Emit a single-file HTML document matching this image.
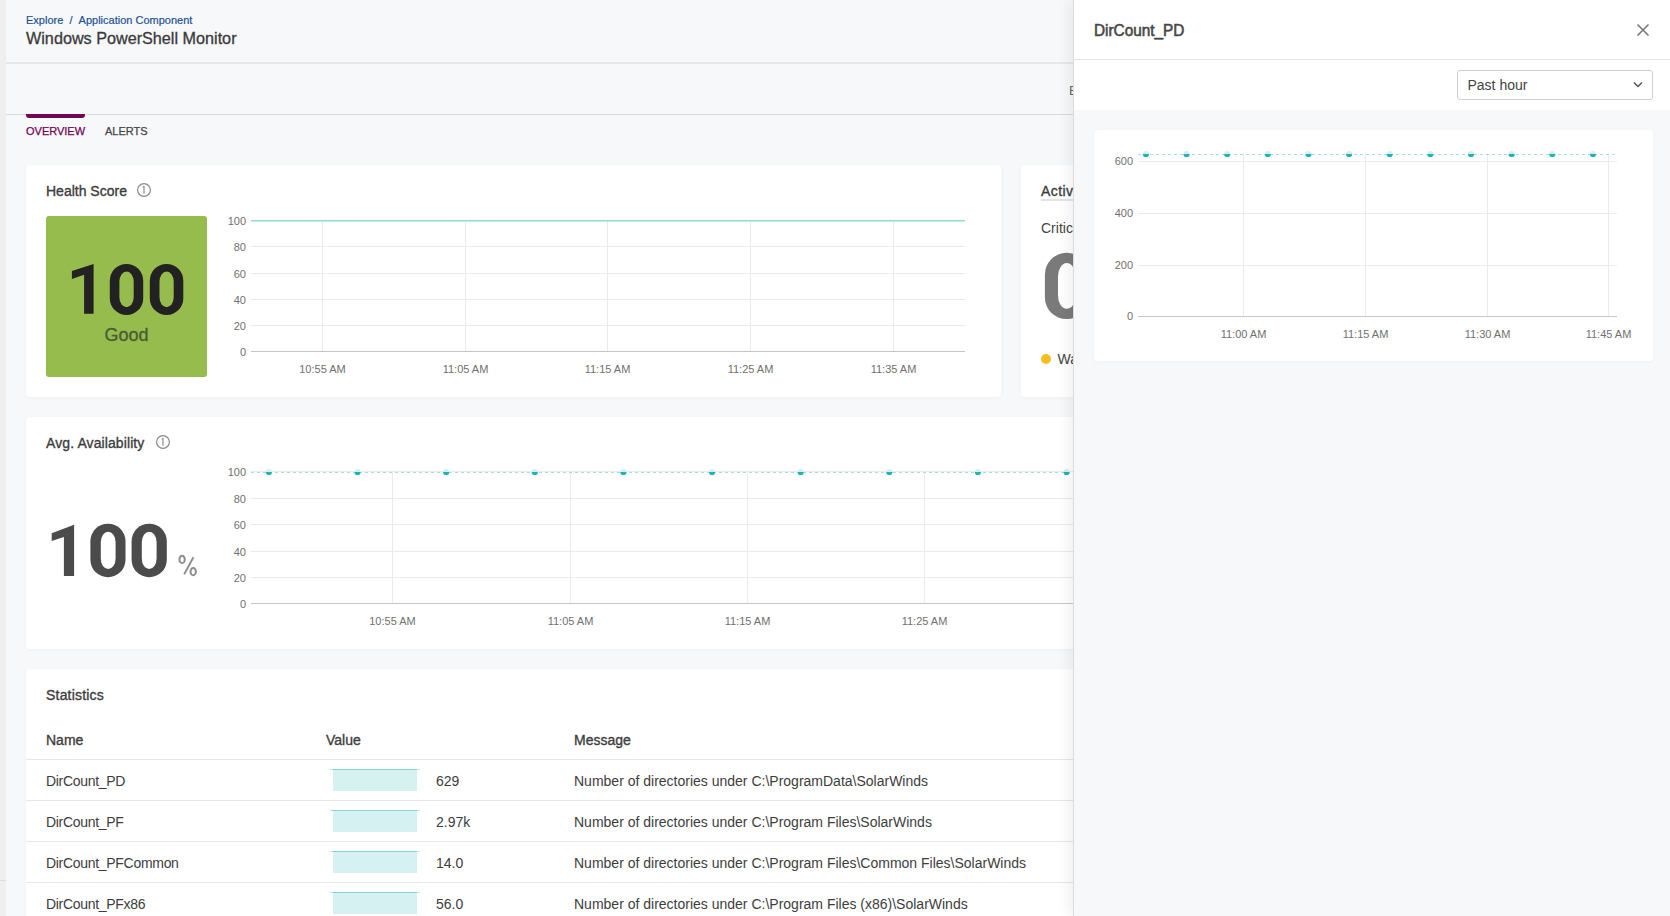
<!DOCTYPE html>
<html><head><meta charset="utf-8">
<style>
*{box-sizing:border-box;margin:0;padding:0}
html,body{width:1670px;height:916px;overflow:hidden}
body{background:#f7f8fa;font-family:"Liberation Sans",sans-serif;color:#333;position:relative}
.a{position:absolute;white-space:nowrap;line-height:1}
.card{position:absolute;background:#fff;border-radius:4px;box-shadow:0 1px 4px rgba(0,0,0,0.035)}
.drawer{position:absolute;left:1073px;top:0;width:597px;height:916px;background:#f7f8fa;border-left:1px solid #dcdcdc;box-shadow:-5px 0 12px rgba(0,0,0,0.06)}
</style></head><body>
<div class="a" style="left:0;top:0;width:6px;height:916px;background:#efefef"></div>
<div class="a" style="left:0;top:880px;width:6px;height:1px;background:#dedede"></div>
<div class="a" style="left:26px;top:14.69px;font-size:11px;font-weight:400;color:#1d5296;-webkit-text-stroke:0.2px #1d5296">Explore&nbsp;&nbsp;/&nbsp;&nbsp;Application Component</div>
<div class="a" style="left:26px;top:30.29px;font-size:16.2px;font-weight:400;color:#3b3b3b;-webkit-text-stroke:0.3px #3b3b3b">Windows PowerShell Monitor</div>
<div class="a" style="left:6px;top:62px;width:1067px;height:2px;background:#e6e7e9"></div>
<div class="a" style="left:1069px;top:84.00px;font-size:13px;font-weight:400;color:#666;">Edit</div>
<div class="a" style="left:6px;top:114px;width:1067px;height:1px;background:#dadbdd"></div>
<div class="a" style="left:26px;top:114px;width:59px;height:4px;background:#710654;border-radius:0 0 3px 3px"></div>
<div class="a" style="left:26px;top:125.69px;font-size:11px;font-weight:400;color:#710654;-webkit-text-stroke:0.25px #710654">OVERVIEW</div>
<div class="a" style="left:105px;top:125.69px;font-size:11px;font-weight:400;color:#444;-webkit-text-stroke:0.25px #444">ALERTS</div>
<div class="card" style="left:26px;top:165px;width:975px;height:232px"></div>
<div class="a" style="left:46px;top:183.85px;font-size:14px;font-weight:400;color:#3d3d3d;-webkit-text-stroke:0.35px #3d3d3d">Health Score</div>
<svg class="a" style="left:136px;top:182px" width="16" height="16" viewBox="0 0 16 16"><circle cx="8" cy="8" r="6.4" fill="none" stroke="#8a8a8a" stroke-width="1.2"/><path d="M8 4.2 V11.8" stroke="#8a8a8a" stroke-width="1.15" fill="none"/><path d="M6.5 4.9 H8.4" stroke="#8a8a8a" stroke-width="1" fill="none"/></svg>
<div class="a" style="left:46px;top:216px;width:161px;height:161px;background:#97bc4e;border-radius:3px"></div>
<svg class="a" style="left:0;top:0" width="1670" height="916" viewBox="0 0 1670 916"><path d="M71.9 271.1 L93.6 264 L93.6 313.8 L84.1 313.8 L84.1 274.8 L71.9 279 Z" fill="#222"/><rect x="109.8" y="264" width="33.4" height="50.9" rx="16.7" ry="16.5" fill="#222"/><rect x="119.4" y="271.6" width="14.3" height="35.6" rx="7.15" ry="10" fill="#97bc4e"/><rect x="149.8" y="264" width="33.5" height="50.9" rx="16.7" ry="16.5" fill="#222"/><rect x="159.5" y="271.6" width="14.2" height="35.6" rx="7.1" ry="10" fill="#97bc4e"/></svg>
<div class="a" style="left:46.00px;top:325.76px;width:161px;text-align:center;font-size:18px;font-weight:400;color:#4a5c33;-webkit-text-stroke:0.35px #4a5c33">Good</div>
<svg class="a" style="left:0;top:0" width="1670" height="916" viewBox="0 0 1670 916"><rect x="251" y="220" width="714" height="1" fill="#ebebeb"/><rect x="251" y="246" width="714" height="1" fill="#ebebeb"/><rect x="251" y="273" width="714" height="1" fill="#ebebeb"/><rect x="251" y="299" width="714" height="1" fill="#ebebeb"/><rect x="251" y="325" width="714" height="1" fill="#ebebeb"/><rect x="251" y="351" width="714" height="1" fill="#c6c6c6"/><rect x="322" y="220" width="1" height="131" fill="#ebebeb"/><rect x="465" y="220" width="1" height="131" fill="#ebebeb"/><rect x="607" y="220" width="1" height="131" fill="#ebebeb"/><rect x="750" y="220" width="1" height="131" fill="#ebebeb"/><rect x="893" y="220" width="1" height="131" fill="#ebebeb"/><rect x="251" y="220" width="714" height="1.5" fill="#8fd9d6"/></svg>
<div class="a" style="left:206.00px;top:215.99px;width:40px;text-align:right;font-size:11px;font-weight:400;color:#707070;">100</div>
<div class="a" style="left:206.00px;top:241.99px;width:40px;text-align:right;font-size:11px;font-weight:400;color:#707070;">80</div>
<div class="a" style="left:206.00px;top:268.99px;width:40px;text-align:right;font-size:11px;font-weight:400;color:#707070;">60</div>
<div class="a" style="left:206.00px;top:294.99px;width:40px;text-align:right;font-size:11px;font-weight:400;color:#707070;">40</div>
<div class="a" style="left:206.00px;top:320.99px;width:40px;text-align:right;font-size:11px;font-weight:400;color:#707070;">20</div>
<div class="a" style="left:206.00px;top:346.99px;width:40px;text-align:right;font-size:11px;font-weight:400;color:#707070;">0</div>
<div class="a" style="left:282.50px;top:363.69px;width:80px;text-align:center;font-size:11px;font-weight:400;color:#707070;">10:55 AM</div>
<div class="a" style="left:425.50px;top:363.69px;width:80px;text-align:center;font-size:11px;font-weight:400;color:#707070;">11:05 AM</div>
<div class="a" style="left:567.50px;top:363.69px;width:80px;text-align:center;font-size:11px;font-weight:400;color:#707070;">11:15 AM</div>
<div class="a" style="left:710.50px;top:363.69px;width:80px;text-align:center;font-size:11px;font-weight:400;color:#707070;">11:25 AM</div>
<div class="a" style="left:853.50px;top:363.69px;width:80px;text-align:center;font-size:11px;font-weight:400;color:#707070;">11:35 AM</div>
<div class="card" style="left:1021px;top:165px;width:400px;height:232px"></div>
<div class="a" style="left:1041px;top:183.85px;font-size:14px;font-weight:400;color:#3d3d3d;-webkit-text-stroke:0.35px #3d3d3d"><span style="border-bottom:2px solid #e3e3e3;padding-bottom:0px;letter-spacing:0.4px">Active Alerts</span></div>
<div class="a" style="left:1041px;top:221.15px;font-size:14px;font-weight:400;color:#444;">Critical</div>
<svg class="a" style="left:0;top:0" width="1670" height="916" viewBox="0 0 1670 916"><rect x="1044.9" y="252.8" width="43.5" height="66.3" rx="21.7" ry="21.7" fill="#7a7a7a"/><rect x="1058" y="263.1" width="17.6" height="45.7" rx="8.8" ry="13" fill="#fff"/></svg>
<div class="a" style="left:1041px;top:354px;width:10px;height:10px;border-radius:50%;background:#f5bd1f"></div>
<div class="a" style="left:1057.5px;top:351.85px;font-size:14px;font-weight:400;color:#444;">Warning</div>
<div class="card" style="left:26px;top:417px;width:1300px;height:232px"></div>
<div class="a" style="left:46px;top:435.95px;font-size:14px;font-weight:400;color:#3d3d3d;-webkit-text-stroke:0.35px #3d3d3d;letter-spacing:0.1px">Avg. Availability</div>
<svg class="a" style="left:154.5px;top:433.7px" width="16" height="16" viewBox="0 0 16 16"><circle cx="8" cy="8" r="6.4" fill="none" stroke="#8a8a8a" stroke-width="1.2"/><path d="M8 4.2 V11.8" stroke="#8a8a8a" stroke-width="1.15" fill="none"/><path d="M6.5 4.9 H8.4" stroke="#8a8a8a" stroke-width="1" fill="none"/></svg>
<svg class="a" style="left:0;top:0" width="1670" height="916" viewBox="0 0 1670 916"><path d="M51.7 533.2 L74.1 524.8 L74.1 576 L63.9 576 L63.9 537 L51.7 540.9 Z" fill="#4b4b4b"/><rect x="90.4" y="523.7" width="35.1" height="53.5" rx="17.5" ry="17.5" fill="#4b4b4b"/><rect x="100.8" y="531.7" width="14.8" height="37.4" rx="7.4" ry="10.5" fill="#fff"/><rect x="131.6" y="523.7" width="35.2" height="53.5" rx="17.5" ry="17.5" fill="#4b4b4b"/><rect x="141.8" y="531.7" width="14.8" height="37.4" rx="7.4" ry="10.5" fill="#fff"/></svg>
<svg class="a" style="left:170px;top:550px" width="40" height="35" viewBox="170 550 40 35"><g fill="none" stroke="#8e8e8e" stroke-width="2"><ellipse cx="182.1" cy="559.4" rx="2.7" ry="3.7"/><ellipse cx="193.2" cy="571.6" rx="2.7" ry="3.7"/></g><path d="M193.4 557.2 L184.2 574.3" stroke="#8e8e8e" stroke-width="1.9"/></svg>
<svg class="a" style="left:0;top:0" width="1670" height="916" viewBox="0 0 1670 916"><rect x="251" y="471" width="849" height="1" fill="#ebebeb"/><rect x="251" y="498" width="849" height="1" fill="#ebebeb"/><rect x="251" y="524" width="849" height="1" fill="#ebebeb"/><rect x="251" y="551" width="849" height="1" fill="#ebebeb"/><rect x="251" y="577" width="849" height="1" fill="#ebebeb"/><rect x="251" y="603" width="849" height="1" fill="#c6c6c6"/><rect x="392" y="471" width="1" height="132" fill="#ebebeb"/><rect x="570" y="471" width="1" height="132" fill="#ebebeb"/><rect x="747" y="471" width="1" height="132" fill="#ebebeb"/><rect x="924" y="471" width="1" height="132" fill="#ebebeb"/><line x1="251" y1="472.5" x2="1100" y2="472.5" stroke="#a6e1e0" stroke-width="1" stroke-dasharray="3 3"/><circle cx="268.9" cy="472.2" r="3.1" fill="#d3f0ef"/><path d="M265.79999999999995,472.0 A3.1,3.1 0 0 0 272.0,472.0 Z" fill="#1fb3b3"/><circle cx="357.53" cy="472.2" r="3.1" fill="#d3f0ef"/><path d="M354.42999999999995,472.0 A3.1,3.1 0 0 0 360.63,472.0 Z" fill="#1fb3b3"/><circle cx="446.15999999999997" cy="472.2" r="3.1" fill="#d3f0ef"/><path d="M443.05999999999995,472.0 A3.1,3.1 0 0 0 449.26,472.0 Z" fill="#1fb3b3"/><circle cx="534.79" cy="472.2" r="3.1" fill="#d3f0ef"/><path d="M531.6899999999999,472.0 A3.1,3.1 0 0 0 537.89,472.0 Z" fill="#1fb3b3"/><circle cx="623.42" cy="472.2" r="3.1" fill="#d3f0ef"/><path d="M620.3199999999999,472.0 A3.1,3.1 0 0 0 626.52,472.0 Z" fill="#1fb3b3"/><circle cx="712.05" cy="472.2" r="3.1" fill="#d3f0ef"/><path d="M708.9499999999999,472.0 A3.1,3.1 0 0 0 715.15,472.0 Z" fill="#1fb3b3"/><circle cx="800.68" cy="472.2" r="3.1" fill="#d3f0ef"/><path d="M797.5799999999999,472.0 A3.1,3.1 0 0 0 803.78,472.0 Z" fill="#1fb3b3"/><circle cx="889.31" cy="472.2" r="3.1" fill="#d3f0ef"/><path d="M886.2099999999999,472.0 A3.1,3.1 0 0 0 892.41,472.0 Z" fill="#1fb3b3"/><circle cx="977.9399999999999" cy="472.2" r="3.1" fill="#d3f0ef"/><path d="M974.8399999999999,472.0 A3.1,3.1 0 0 0 981.04,472.0 Z" fill="#1fb3b3"/><circle cx="1066.57" cy="472.2" r="3.1" fill="#d3f0ef"/><path d="M1063.47,472.0 A3.1,3.1 0 0 0 1069.6699999999998,472.0 Z" fill="#1fb3b3"/></svg>
<div class="a" style="left:206.00px;top:466.99px;width:40px;text-align:right;font-size:11px;font-weight:400;color:#707070;">100</div>
<div class="a" style="left:206.00px;top:493.99px;width:40px;text-align:right;font-size:11px;font-weight:400;color:#707070;">80</div>
<div class="a" style="left:206.00px;top:519.99px;width:40px;text-align:right;font-size:11px;font-weight:400;color:#707070;">60</div>
<div class="a" style="left:206.00px;top:546.99px;width:40px;text-align:right;font-size:11px;font-weight:400;color:#707070;">40</div>
<div class="a" style="left:206.00px;top:572.99px;width:40px;text-align:right;font-size:11px;font-weight:400;color:#707070;">20</div>
<div class="a" style="left:206.00px;top:598.99px;width:40px;text-align:right;font-size:11px;font-weight:400;color:#707070;">0</div>
<div class="a" style="left:352.50px;top:615.69px;width:80px;text-align:center;font-size:11px;font-weight:400;color:#707070;">10:55 AM</div>
<div class="a" style="left:530.50px;top:615.69px;width:80px;text-align:center;font-size:11px;font-weight:400;color:#707070;">11:05 AM</div>
<div class="a" style="left:707.50px;top:615.69px;width:80px;text-align:center;font-size:11px;font-weight:400;color:#707070;">11:15 AM</div>
<div class="a" style="left:884.50px;top:615.69px;width:80px;text-align:center;font-size:11px;font-weight:400;color:#707070;">11:25 AM</div>
<div class="card" style="left:26px;top:669px;width:1300px;height:300px"></div>
<div class="a" style="left:46px;top:688.15px;font-size:14px;font-weight:400;color:#3d3d3d;-webkit-text-stroke:0.35px #3d3d3d;letter-spacing:0.2px">Statistics</div>
<div class="a" style="left:46px;top:733.45px;font-size:14px;font-weight:400;color:#3d3d3d;-webkit-text-stroke:0.35px #3d3d3d">Name</div>
<div class="a" style="left:326px;top:733.45px;font-size:14px;font-weight:400;color:#3d3d3d;-webkit-text-stroke:0.35px #3d3d3d">Value</div>
<div class="a" style="left:574px;top:733.45px;font-size:14px;font-weight:400;color:#3d3d3d;-webkit-text-stroke:0.35px #3d3d3d">Message</div>
<div class="a" style="left:26px;top:759px;width:1047px;height:1px;background:#e6e6e6"></div>
<div class="a" style="left:46px;top:774.15px;font-size:14px;font-weight:400;color:#3d3d3d;letter-spacing:-0.3px">DirCount_PD</div>
<div class="a" style="left:333px;top:769px;width:84px;height:22px;background:#d5f1f1"></div>
<div class="a" style="left:330px;top:769px;width:90px;height:1px;background:#c5ebeb"></div>
<div class="a" style="left:332px;top:769px;width:85px;height:1px;background:#86d5d4"></div>
<div class="a" style="left:436px;top:774.15px;font-size:14px;font-weight:400;color:#3d3d3d;">629</div>
<div class="a" style="left:574px;top:774.15px;font-size:14px;font-weight:400;color:#3d3d3d;">Number of directories under C:\ProgramData\SolarWinds</div>
<div class="a" style="left:26px;top:800px;width:1047px;height:1px;background:#e6e6e6"></div>
<div class="a" style="left:46px;top:815.15px;font-size:14px;font-weight:400;color:#3d3d3d;letter-spacing:-0.3px">DirCount_PF</div>
<div class="a" style="left:333px;top:810px;width:84px;height:22px;background:#d5f1f1"></div>
<div class="a" style="left:330px;top:810px;width:90px;height:1px;background:#c5ebeb"></div>
<div class="a" style="left:332px;top:810px;width:85px;height:1px;background:#86d5d4"></div>
<div class="a" style="left:436px;top:815.15px;font-size:14px;font-weight:400;color:#3d3d3d;">2.97k</div>
<div class="a" style="left:574px;top:815.15px;font-size:14px;font-weight:400;color:#3d3d3d;">Number of directories under C:\Program Files\SolarWinds</div>
<div class="a" style="left:26px;top:841px;width:1047px;height:1px;background:#e6e6e6"></div>
<div class="a" style="left:46px;top:856.15px;font-size:14px;font-weight:400;color:#3d3d3d;letter-spacing:-0.3px">DirCount_PFCommon</div>
<div class="a" style="left:333px;top:851px;width:84px;height:22px;background:#d5f1f1"></div>
<div class="a" style="left:330px;top:851px;width:90px;height:1px;background:#c5ebeb"></div>
<div class="a" style="left:332px;top:851px;width:85px;height:1px;background:#86d5d4"></div>
<div class="a" style="left:436px;top:856.15px;font-size:14px;font-weight:400;color:#3d3d3d;">14.0</div>
<div class="a" style="left:574px;top:856.15px;font-size:14px;font-weight:400;color:#3d3d3d;">Number of directories under C:\Program Files\Common Files\SolarWinds</div>
<div class="a" style="left:26px;top:882px;width:1047px;height:1px;background:#e6e6e6"></div>
<div class="a" style="left:46px;top:897.15px;font-size:14px;font-weight:400;color:#3d3d3d;letter-spacing:-0.3px">DirCount_PFx86</div>
<div class="a" style="left:333px;top:892px;width:84px;height:22px;background:#d5f1f1"></div>
<div class="a" style="left:330px;top:892px;width:90px;height:1px;background:#c5ebeb"></div>
<div class="a" style="left:332px;top:892px;width:85px;height:1px;background:#86d5d4"></div>
<div class="a" style="left:436px;top:897.15px;font-size:14px;font-weight:400;color:#3d3d3d;">56.0</div>
<div class="a" style="left:574px;top:897.15px;font-size:14px;font-weight:400;color:#3d3d3d;">Number of directories under C:\Program Files (x86)\SolarWinds</div>
<div class="a" style="left:26px;top:923px;width:1047px;height:1px;background:#e6e6e6"></div>
<div class="drawer"></div>
<div class="a" style="left:1074px;top:0;width:596px;height:110px;background:#fff"></div>
<div class="a" style="left:1074px;top:59px;width:596px;height:1px;background:#e4e4e4"></div>
<div class="a" style="left:1094px;top:22.03px;font-size:16.5px;font-weight:400;color:#474747;-webkit-text-stroke:0.6px #474747;transform:scaleX(0.93);transform-origin:0 0">DirCount_PD</div>
<svg class="a" style="left:1636px;top:23px" width="14" height="14" viewBox="0 0 14 14"><path d="M1.5 1.5 L12.5 12.5 M12.5 1.5 L1.5 12.5" stroke="#777" stroke-width="1.6" fill="none"/></svg>
<div class="a" style="left:1457px;top:70px;width:196px;height:30px;border:1px solid #cfcfcf;border-radius:3px;background:#fff"></div>
<div class="a" style="left:1467.5px;top:78.45px;font-size:14px;font-weight:400;color:#444;">Past hour</div>
<svg class="a" style="left:1632px;top:80px" width="12" height="9" viewBox="0 0 12 9"><path d="M2 2.5 L6 6.5 L10 2.5" stroke="#555" stroke-width="1.5" fill="none"/></svg>
<div class="card" style="left:1094px;top:130px;width:559px;height:231px"></div>
<svg class="a" style="left:0;top:0" width="1670" height="916" viewBox="0 0 1670 916"><rect x="1138" y="161" width="479" height="1" fill="#ebebeb"/><rect x="1138" y="213" width="479" height="1" fill="#ebebeb"/><rect x="1138" y="265" width="479" height="1" fill="#ebebeb"/><rect x="1138" y="316" width="479" height="1" fill="#c6c6c6"/><rect x="1243" y="153" width="1" height="163" fill="#ebebeb"/><rect x="1365" y="153" width="1" height="163" fill="#ebebeb"/><rect x="1487" y="153" width="1" height="163" fill="#ebebeb"/><rect x="1608" y="153" width="1" height="163" fill="#ebebeb"/><line x1="1138" y1="154.5" x2="1617" y2="154.5" stroke="#a6e1e0" stroke-width="1" stroke-dasharray="3 3"/><circle cx="1145.9" cy="154.2" r="3.1" fill="#d3f0ef"/><path d="M1142.8000000000002,154.0 A3.1,3.1 0 0 0 1149.0,154.0 Z" fill="#1fb3b3"/><circle cx="1186.5400000000002" cy="154.2" r="3.1" fill="#d3f0ef"/><path d="M1183.4400000000003,154.0 A3.1,3.1 0 0 0 1189.64,154.0 Z" fill="#1fb3b3"/><circle cx="1227.18" cy="154.2" r="3.1" fill="#d3f0ef"/><path d="M1224.0800000000002,154.0 A3.1,3.1 0 0 0 1230.28,154.0 Z" fill="#1fb3b3"/><circle cx="1267.8200000000002" cy="154.2" r="3.1" fill="#d3f0ef"/><path d="M1264.7200000000003,154.0 A3.1,3.1 0 0 0 1270.92,154.0 Z" fill="#1fb3b3"/><circle cx="1308.46" cy="154.2" r="3.1" fill="#d3f0ef"/><path d="M1305.3600000000001,154.0 A3.1,3.1 0 0 0 1311.56,154.0 Z" fill="#1fb3b3"/><circle cx="1349.1000000000001" cy="154.2" r="3.1" fill="#d3f0ef"/><path d="M1346.0000000000002,154.0 A3.1,3.1 0 0 0 1352.2,154.0 Z" fill="#1fb3b3"/><circle cx="1389.74" cy="154.2" r="3.1" fill="#d3f0ef"/><path d="M1386.64,154.0 A3.1,3.1 0 0 0 1392.84,154.0 Z" fill="#1fb3b3"/><circle cx="1430.38" cy="154.2" r="3.1" fill="#d3f0ef"/><path d="M1427.2800000000002,154.0 A3.1,3.1 0 0 0 1433.48,154.0 Z" fill="#1fb3b3"/><circle cx="1471.02" cy="154.2" r="3.1" fill="#d3f0ef"/><path d="M1467.92,154.0 A3.1,3.1 0 0 0 1474.12,154.0 Z" fill="#1fb3b3"/><circle cx="1511.66" cy="154.2" r="3.1" fill="#d3f0ef"/><path d="M1508.5600000000002,154.0 A3.1,3.1 0 0 0 1514.76,154.0 Z" fill="#1fb3b3"/><circle cx="1552.3000000000002" cy="154.2" r="3.1" fill="#d3f0ef"/><path d="M1549.2000000000003,154.0 A3.1,3.1 0 0 0 1555.4,154.0 Z" fill="#1fb3b3"/><circle cx="1592.94" cy="154.2" r="3.1" fill="#d3f0ef"/><path d="M1589.8400000000001,154.0 A3.1,3.1 0 0 0 1596.04,154.0 Z" fill="#1fb3b3"/></svg>
<div class="a" style="left:1093.00px;top:156.29px;width:40px;text-align:right;font-size:11px;font-weight:400;color:#707070;">600</div>
<div class="a" style="left:1093.00px;top:208.29px;width:40px;text-align:right;font-size:11px;font-weight:400;color:#707070;">400</div>
<div class="a" style="left:1093.00px;top:260.29px;width:40px;text-align:right;font-size:11px;font-weight:400;color:#707070;">200</div>
<div class="a" style="left:1093.00px;top:311.29px;width:40px;text-align:right;font-size:11px;font-weight:400;color:#707070;">0</div>
<div class="a" style="left:1203.50px;top:328.99px;width:80px;text-align:center;font-size:11px;font-weight:400;color:#707070;">11:00 AM</div>
<div class="a" style="left:1325.50px;top:328.99px;width:80px;text-align:center;font-size:11px;font-weight:400;color:#707070;">11:15 AM</div>
<div class="a" style="left:1447.50px;top:328.99px;width:80px;text-align:center;font-size:11px;font-weight:400;color:#707070;">11:30 AM</div>
<div class="a" style="left:1568.50px;top:328.99px;width:80px;text-align:center;font-size:11px;font-weight:400;color:#707070;">11:45 AM</div>
</body></html>
